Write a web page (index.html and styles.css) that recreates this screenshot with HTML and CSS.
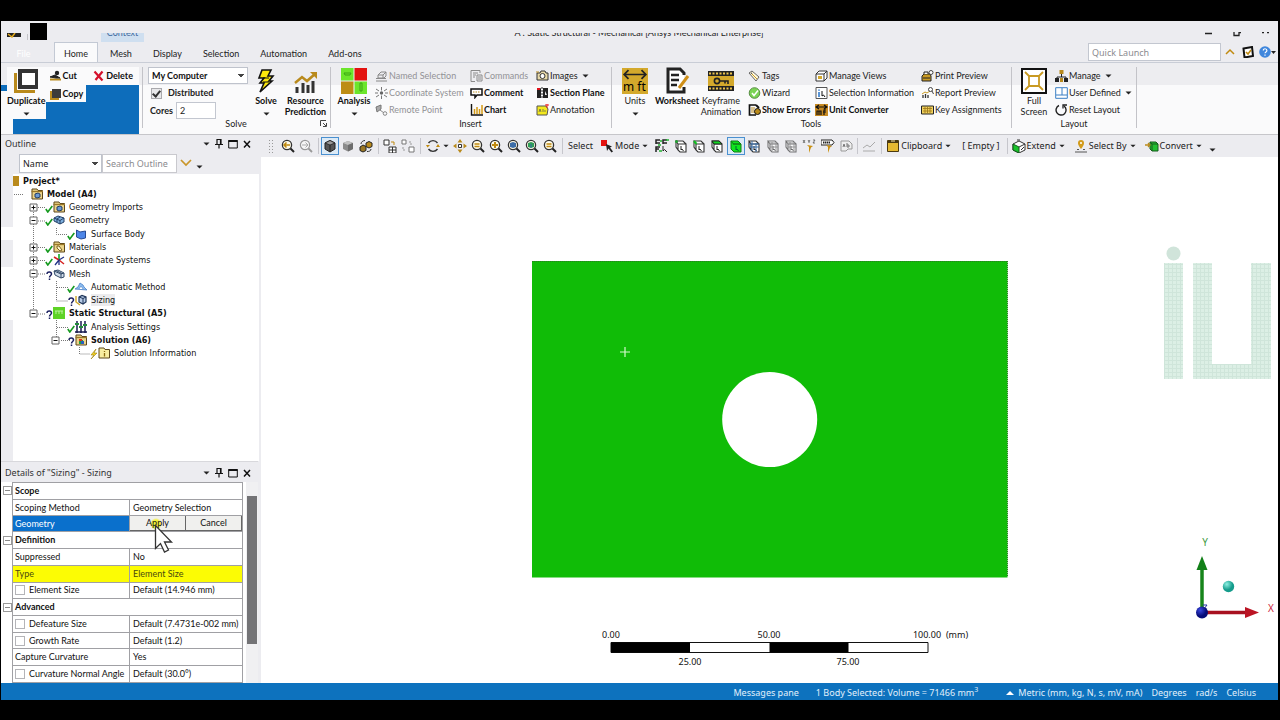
FILE: index.html
```html
<!DOCTYPE html>
<html lang="en">
<head>
<meta charset="utf-8">
<title>A : Static Structural - Mechanical [Ansys Mechanical Enterprise]</title>
<link rel="stylesheet" href="styles.css">
</head>
<body>
<svg class="defs" aria-hidden="true">
  <symbol id="caret" viewBox="0 0 7 4"><path d="M.5.5h6L3.500 3.500z" fill="#222"/></symbol>
  <symbol id="pin" viewBox="0 0 10 10"><path d="M3 .5h4v5H3zM1 5.500h8M5 5.500v4M6.500.5v5" fill="none" stroke="#111" stroke-width="1.200"/></symbol>
  <symbol id="max" viewBox="0 0 10 10"><path d="M.7 1.500h8.600v7.500H.7z" fill="none" stroke="#111"/><path d="M.5 1h9v2h-9z" fill="#111"/></symbol>
  <symbol id="close" viewBox="0 0 10 10"><path d="M2 2l6 6.500M8 2L2 8.500" stroke="#111" stroke-width="1.500"/></symbol>

  <symbol id="duplicate" viewBox="0 0 26 26"><path d="M1 5v20h21v-3H4V5z" fill="#b98a1c"/><path d="M5 1h20v20H5z" fill="#333"/><path d="M9 5h13v12H9z" fill="#fff"/></symbol>
  <symbol id="cut" viewBox="0 0 13 12"><path d="M1 9.500h11" stroke="#b98a1c" stroke-width="2"/><circle cx="8" cy="3" r="2.200" fill="#222"/><path d="M1 7l5-2 5 3-4 0z" fill="#222" stroke="#222"/></symbol>
  <symbol id="copy" viewBox="0 0 13 12"><path d="M1 3h2v7h7v2H1z" fill="#b98a1c"/><path d="M3 1h9v9H3z" fill="#3b3b3b"/></symbol>
  <symbol id="delete" viewBox="0 0 12 12"><path d="M2 1.500l8 9M10 1.500L3 10" stroke="#d5122c" stroke-width="2.200"/></symbol>
  <symbol id="bolt" viewBox="0 0 20 26"><path d="M6 2h9l-3 6h5l-4 5h3L4 24l4-9H4l4-5H3z" fill="#fbe80b" stroke="#111" stroke-width="1.600"/><path d="M7 10h6M7 14h6" stroke="#111"/></symbol>
  <symbol id="resource" viewBox="0 0 26 26"><path d="M4 25v-6M10 25v-10M15 25v-8M20 25V13" stroke="#333" stroke-width="3"/><path d="M2 15l7-6 5 4 8-7" fill="none" stroke="#b98a1c" stroke-width="2.500"/><path d="M17 4h7v7z" fill="#b98a1c"/></symbol>
  <symbol id="analysis" viewBox="0 0 26 26"><path d="M0 0h12.500v12.500H0zM13.500 13.500H26V26H13.500z" fill="#6ce52b"/><path d="M13.500 0H26v12.500H13.500z" fill="#e3120f"/><path d="M0 13.500h12.500V26H0z" fill="#bd8d13"/><path d="M3 5h7l-1 2H4zM19 15v8h2v-8z" fill="none" stroke="#3ba513"/></symbol>
  <symbol id="named" viewBox="0 0 13 12"><path d="M1 11h11M1 8.500h10M3 5l3-3h5v4l-2 2H3zM3 5h5v3M8 5l3-3" fill="none" stroke="#888"/></symbol>
  <symbol id="coord" viewBox="0 0 13 12"><path d="M6.500 0v3.500M6.500 8.500V12M1 2l3 2M12 2L9 4M1 10l3-2M12 10L9 8M0 6h3M10 6h3" stroke="#777"/><circle cx="6.500" cy="6" r="1.700" fill="#666"/></symbol>
  <symbol id="remote" viewBox="0 0 13 12"><path d="M1 3l5-2v4L2 8z" fill="#aaa" stroke="#777"/><path d="M5 6l4 3" stroke="#888"/><circle cx="10" cy="9.500" r="1.800" fill="none" stroke="#888"/></symbol>
  <symbol id="commands" viewBox="0 0 13 12"><path d="M10 3V.5H1v11h4M3 3h5M3 5h3M3 7h2M7 5h5v6H7zM8 7h3M8 9h3" fill="none" stroke="#8a8a8a"/></symbol>
  <symbol id="comment" viewBox="0 0 13 12"><path d="M1 2h11v6H7l-2 2.500V8H1z" fill="#fff" stroke="#111" stroke-width="1.500"/><path d="M3 5h7" stroke="#b98a1c" stroke-dasharray="1.500 1"/></symbol>
  <symbol id="chart" viewBox="0 0 13 12"><path d="M1.500 0v11H13" fill="none" stroke="#111" stroke-width="1.400"/><path d="M4.500 10V5M7 10V3M9.500 10V5M12 10V1" stroke="#d39a16" stroke-width="1.500"/></symbol>
  <symbol id="camera" viewBox="0 0 13 12"><path d="M1 3h3l1-2h4l1 2h2v7H1z" fill="#e8d9a8" stroke="#333"/><circle cx="6.500" cy="6" r="2.500" fill="#fff" stroke="#333"/><path d="M0 2h3" stroke="#b98a1c"/></symbol>
  <symbol id="section" viewBox="0 0 13 12"><path d="M1 3l4-2v10H1zM7 1h5v10H7z" fill="#222"/><path d="M6 0v12" stroke="#222" stroke-dasharray="2 1"/><path d="M1 1h3v2H1z" fill="#e0101b"/><path d="M9 4l2 4H9z" fill="#eee"/></symbol>
  <symbol id="annot" viewBox="0 0 13 12"><path d="M1 2h9l2 3-1 6H1z" fill="#f3e81d" stroke="#555"/><path d="M3 8l1-3 1 3M7 5v3M9 6v2" stroke="#555" fill="none" stroke-width=".7"/><path d="M9 1h4M11 0v4" stroke="#e22"/></symbol>
  <symbol id="units" viewBox="0 0 24 24"><path d="M0 0h24v24H0z" fill="#d4a92c"/><path d="M2 6h20M6 2L2 6l4 4M18 2l4 4-4 4" fill="none" stroke="#222" stroke-width="1.600"/></symbol>
  <symbol id="worksheet" viewBox="0 0 26 28"><path d="M20 8V6l-4-4H4v23h16v-5" fill="#fff" stroke="#222" stroke-width="3"/><path d="M7 8h8M7 13h8M7 18h6" stroke="#222" stroke-width="2.500"/><path d="M15 21l9-12" stroke="#cf8f17" stroke-width="3"/></symbol>
  <symbol id="keyframe" viewBox="0 0 26 20"><path d="M0 0h26v20H0z" fill="#222"/><path d="M0 5h26v10H0z" fill="#d4a92c"/><path d="M1 2.500h24M1 17.500h24" stroke="#eac24c" stroke-width="2" stroke-dasharray="2 1.500"/><circle cx="9" cy="10" r="2.600" fill="none" stroke="#222" stroke-width="1.600"/><path d="M12 10h8v3M17 10v2.500" fill="none" stroke="#222" stroke-width="1.600"/></symbol>
  <symbol id="tags" viewBox="0 0 13 12"><path d="M1 3l3-2 7 6-3 4z" fill="#fff8dc" stroke="#666"/><path d="M3 3l6 6" stroke="#c99a22"/><circle cx="3.500" cy="3.200" r=".8" fill="#555"/></symbol>
  <symbol id="wizard" viewBox="0 0 13 12"><circle cx="6.500" cy="6" r="5.300" fill="#7bd455" stroke="#5a8f45"/><path d="M4 6l2 2.500 4-5" fill="none" stroke="#fff" stroke-width="1.500"/></symbol>
  <symbol id="errors" viewBox="0 0 13 12"><path d="M8 1H1.500v10H8" fill="none" stroke="#111" stroke-width="1.700"/><path d="M3 4h4M3 6h3M3 8h4" stroke="#b98a1c"/><circle cx="9.500" cy="7.500" r="3" fill="#b98a1c" stroke="#111"/><path d="M8 1l3 3" stroke="#111" stroke-width="2"/></symbol>
  <symbol id="views" viewBox="0 0 13 12"><path d="M1 4l3-3h8v7l-3 3H1zM1 4h8v7M9 4l3-3" fill="#fff" stroke="#333"/><path d="M3 6h4v3H3z" fill="#d4a92c"/></symbol>
  <symbol id="selinfo" viewBox="0 0 13 12"><path d="M1 .5h11v11H1z" fill="#fff" stroke="#555"/><path d="M4 5v5M4 2.500v1.200" stroke="#2372c8" stroke-width="1.500"/><path d="M7 4v5l1.500-1L10 10" fill="none" stroke="#111"/></symbol>
  <symbol id="unitconv" viewBox="0 0 13 12"><path d="M0 0h13v12H0z" fill="#c78a22"/><path d="M1 3h11M4 1L1 3l3 2M9 1l3 2-3 2M2 11V7h2v4M4 7h2v4M9 11V6h2M8 8h3" fill="none" stroke="#111" stroke-width="1.200"/></symbol>
  <symbol id="print" viewBox="0 0 13 12"><path d="M1 6l2-2h6l1 2v5H1z" fill="#c99a22" stroke="#222"/><path d="M3 4V2h4v2M2 8h7" stroke="#222" fill="#fff"/><circle cx="10" cy="2.500" r="2" fill="#fff" stroke="#444"/></symbol>
  <symbol id="report" viewBox="0 0 13 12"><path d="M2 11V8M4.500 11V7M7 11V8" stroke="#333" stroke-width="1.300"/><path d="M1 7l3-2 2 1 3-2" fill="none" stroke="#c99a22"/><circle cx="9.500" cy="2.500" r="2" fill="#fff" stroke="#444"/><path d="M11 4l1.500 3" stroke="#444"/></symbol>
  <symbol id="keys" viewBox="0 0 13 12"><path d="M.5 2h12v8H.5z" fill="#f2d25e" stroke="#222"/><path d="M2 4.500h9M2 7h9M4 3v6M6.500 3v6M9 3v6" stroke="#9a7415" stroke-width=".8"/></symbol>
  <symbol id="full" viewBox="0 0 26 26"><path d="M1 1h24v24H1z" fill="#fff" stroke="#111" stroke-width="2"/><path d="M8 8h10v10H8zM8 8L4 4M18 8l4-4M8 18l-4 4M18 18l4 4" fill="none" stroke="#c99a22" stroke-width="1.800"/></symbol>
  <symbol id="manage" viewBox="0 0 13 12"><path d="M6.500 4v3M2 10V7h9v3" fill="none" stroke="#222"/><path d="M4.500 0h4v4h-4z" fill="#b98a1c"/><path d="M0 8h4v4H0zM9 8h4v4H9z" fill="#222"/><path d="M5 8h3v4H5z" fill="#b98a1c"/></symbol>
  <symbol id="userdef" viewBox="0 0 13 12"><path d="M.7.700h11.600v10.600H.7zM7 8V1M1 8h11" fill="#fff" stroke="#3a7fc4"/></symbol>
  <symbol id="reset" viewBox="0 0 13 12"><path d="M4 1.500a5 5 0 1 0 5 .5" fill="none" stroke="#222" stroke-width="1.400"/><path d="M8 4.500V1h4" fill="none" stroke="#222" stroke-width="1.300"/></symbol>

  <symbol id="zoomg" viewBox="0 0 14 14"><circle cx="6" cy="6" r="4.600" fill="#fffbe8" stroke="#333" stroke-width="1.300"/><path d="M9.500 9.500L13 13" stroke="#222" stroke-width="2"/></symbol>
  <symbol id="zprev" viewBox="0 0 14 14"><use href="#zoomg"/><path d="M3 6h6M5.500 3.500L3 6l2.500 2.500" fill="none" stroke="#c08a10" stroke-width="1.500"/></symbol>
  <symbol id="znext" viewBox="0 0 14 14"><circle cx="6" cy="6" r="4.600" fill="#f6f6f6" stroke="#999" stroke-width="1.200"/><path d="M9.500 9.500L13 13" stroke="#999" stroke-width="1.800"/><path d="M3 6h6M6.500 3.500L9 6 6.500 8.500" fill="none" stroke="#aaa"/></symbol>
  <symbol id="zbox" viewBox="0 0 14 14"><use href="#zoomg"/><path d="M3.500 5h5M3.500 7.500h5" stroke="#c08a10" stroke-width="1.400"/></symbol>
  <symbol id="zplus" viewBox="0 0 14 14"><use href="#zoomg"/><path d="M3 6h6M6 3v6" stroke="#c08a10" stroke-width="2"/></symbol>
  <symbol id="zblue" viewBox="0 0 14 14"><use href="#zoomg"/><path d="M3 4l3-1 3 1v4L6 9 3 8z" fill="#3c6da8"/></symbol>
  <symbol id="zgreen" viewBox="0 0 14 14"><use href="#zoomg"/><path d="M3 4l3-1 3 1v4L6 9 3 8z" fill="#2f9d58"/><path d="M6 5v4" stroke="#3c6da8"/></symbol>
  <symbol id="cubedark" viewBox="0 0 14 14"><path d="M2 4l5-2.500L12 4v6l-5 3-5-3z" fill="#555" stroke="#222"/><path d="M2 4l5 2 5-2-5-2.500z" fill="#999" stroke="#222" stroke-width=".8"/><path d="M7 6v7" stroke="#222"/></symbol>
  <symbol id="cubegray" viewBox="0 0 14 14"><path d="M2 4l5-2 5 2v6l-5 2.500L2 10z" fill="#8b8b8b"/><path d="M2 4l5 2 5-2-5-2z" fill="#c2c2c2"/><path d="M7 6l5-2v6l-5 2.500z" fill="#6d6d6d"/></symbol>
  <symbol id="cubes" viewBox="0 0 14 14"><path d="M1 8l3-2 3 1.500v4L4 13l-3-1.500z" fill="#9a7725" stroke="#222"/><path d="M7 4l3-1.500L13 4v3.500L10 9 7 7.500z" fill="#b98a1c" stroke="#222"/><path d="M2 5c0-2 2-3.500 4-3.500M8 12.500c2 0 4-.5 4-2.500" fill="none" stroke="#333"/></symbol>
  <symbol id="expandg" viewBox="0 0 14 14"><path d="M1 1h5v5H1zM6 8h7v6H6zM6 11h7M9.500 8v6" fill="#fff" stroke="#333"/><path d="M8 3h3v3" fill="none" stroke="#c08a10"/></symbol>
  <symbol id="collapseg" viewBox="0 0 14 14"><path d="M1 1h4v4H1zM8 8h5v5H8z" fill="#fff" stroke="#777"/><path d="M2 8v3h3M8 3h2v3" fill="none" stroke="#999" stroke-dasharray="2 1"/></symbol>
  <symbol id="rotate" viewBox="0 0 14 14"><path d="M2.500 4a5.500 5.500 0 0 1 9 0M11.500 10a5.500 5.500 0 0 1-9 0" fill="none" stroke="#333" stroke-width="1.400"/><path d="M0 6h4L1.500 8.500zM10 8h4l-2-3z" fill="#c08a10"/></symbol>
  <symbol id="pan" viewBox="0 0 14 14"><path d="M7 0l2.500 3.500h-5zM7 14l2.500-3.500h-5zM0 7l3.500-2.500v5zM14 7l-3.500-2.500v5z" fill="#b98a1c"/><path d="M5.500 5.500h3v3h-3z" fill="#fff" stroke="#333"/></symbol>
  <symbol id="mode" viewBox="0 0 14 14"><path d="M1 1h6v6H1z" fill="#e3120f"/><path d="M6 5l6 2.500-2 1 3 4-1.500 1-3-4L7 12z" fill="#222"/></symbol>
  <symbol id="selall" viewBox="0 0 14 14"><path d="M1 5V1h4M8 5V1h4M1 13V8h4M1 4h4M8 4h4M1 10h3" fill="none" stroke="#222" stroke-width="1.500"/><path d="M3 6h3M5 2h2M11 1h3M4 12h3" stroke="#20b430" stroke-width="1.500"/><path d="M8 7v5l1.500-1.500L12 13" fill="none" stroke="#222"/></symbol>
  <symbol id="cube" viewBox="0 0 14 14"><path d="M4 5h8v8H6L4 11zM4 5L2 2h7l3 3M2 2v6l2 3" fill="#fff" stroke="#333" stroke-width="1.100"/><path d="M7 7v4l1-1 1.500 2" fill="none" stroke="#222"/></symbol>
  <symbol id="cubev" viewBox="0 0 14 14"><use href="#cube"/><circle cx="2.500" cy="2.500" r="1.500" fill="#20a030"/></symbol>
  <symbol id="cubee" viewBox="0 0 14 14"><use href="#cube"/><path d="M2 2l2.500 3" stroke="#10c020" stroke-width="2"/></symbol>
  <symbol id="cubef" viewBox="0 0 14 14"><use href="#cube"/><path d="M2 2h7l3 3H4z" fill="#12d822" stroke="#222"/></symbol>
  <symbol id="cubeb" viewBox="0 0 14 14"><path d="M4 5h8v8H5l-3-3V2h7l3 3z" fill="#10e520" stroke="#127a16"/><path d="M2 2l2.500 3" stroke="#127a16"/><path d="M7 7v4l1-1 1.500 2" fill="none" stroke="#063"/></symbol>
  <symbol id="cubem" viewBox="0 0 14 14"><use href="#cube"/><path d="M2 5h10M2 8h10M5 2v10M9 4v9" stroke="#3a6ea8"/></symbol>
  <symbol id="cuben" viewBox="0 0 14 14"><g opacity=".65"><use href="#cube"/><path d="M3 4h8M4 8h8M6 3v9M10 4v9" stroke="#666"/></g></symbol>
  <symbol id="xyz" viewBox="0 0 14 14"><path d="M1 1l2 3M3 1L1 4M6 1l1 1.500L8 1M7 2v2M11 1h2l-2 3h2" fill="none" stroke="#555" stroke-width=".8"/><path d="M5 6l6 1-2 1.500L7 14V8z" fill="#c99010"/></symbol>
  <symbol id="probe" viewBox="0 0 14 14"><path d="M0 1h11l2 2.500L11 6H0z" fill="#fff" stroke="#222"/><path d="M2 3.500h7" stroke="#222" stroke-width="2" stroke-dasharray="1.500 .5"/><path d="M5 6l6 1-2 1.500L7 14V8z" fill="#c99010"/></symbol>
  <symbol id="abc" viewBox="0 0 14 14"><path d="M2 2h8l3 3v5H9l-2 2H2z" fill="#eee" stroke="#999"/><path d="M4 8l1-3 1 3M8 4v4h2V6H8" fill="none" stroke="#777"/></symbol>
  <symbol id="graph" viewBox="0 0 14 14"><path d="M1 12h12M1 9l4-3 3 2 5-5" fill="none" stroke="#aaa"/></symbol>
  <symbol id="clip" viewBox="0 0 14 14"><path d="M1.500 1.500h11v11h-11z" fill="#e6ba32" stroke="#4b3a12"/><path d="M2 1h10v3H2z" fill="#4b3a12"/><path d="M5 2h4" stroke="#f4e4ae"/></symbol>
  <symbol id="extend" viewBox="0 0 14 14"><path d="M1 5l6-3 6 3v6l-6 3-6-3z" fill="#fff" stroke="#333"/><path d="M1 5l6 3v6l-6-3z" fill="#18c42a" stroke="#165a1c"/><path d="M7 8l6-3M5 1h3M9 11l3-3" stroke="#333"/></symbol>
  <symbol id="selby" viewBox="0 0 14 14"><path d="M7 10C4 6 4 5 4 4a3 3 0 0 1 6 0c0 1 0 2-3 6z" fill="#d29b1b"/><circle cx="7" cy="4" r="1" fill="#fff"/><path d="M1 13h12M3 10.500h2M9 10.500h2" stroke="#555"/></symbol>
  <symbol id="convert" viewBox="0 0 14 14"><path d="M5 3h6l2 2v7H7l-2-2zM5 3l2 2v7M7 5h6" fill="#20c030" stroke="#165a1c"/><path d="M0 6h5M3 4l2 2-2 2" stroke="#b98a1c" stroke-width="1.300" fill="none"/></symbol>

  <symbol id="ok" viewBox="0 0 8 10"><path d="M.8 6l2 3L7.300 3" fill="none" stroke="#159a1e" stroke-width="1.600"/></symbol>
  <symbol id="ask" viewBox="0 0 8 10"><path d="M2 4c0-3 4.500-2.500 4.500 0C6.500 5.500 4.500 5.500 4.500 7.500M4.500 8.500V10" fill="none" stroke="#1b2060" stroke-width="1.500"/></symbol>
  <symbol id="zap" viewBox="0 0 8 10"><path d="M6 0L1 6h3L1 10l6-6H4z" fill="#f5d320" stroke="#9a7d10" stroke-width=".6"/></symbol>
  <symbol id="plus" viewBox="0 0 9 9"><path d="M1 1h7v7H1z" fill="#fff" stroke="#666"/><path d="M2.500 4.500h4M4.500 2.500v4" stroke="#111"/></symbol>
  <symbol id="minus" viewBox="0 0 9 9"><path d="M1 1h7v7H1z" fill="#fff" stroke="#666"/><path d="M2.500 4.500h4" stroke="#111"/></symbol>
  <symbol id="folder" viewBox="0 0 12 12"><path d="M1 3V1h5l1 1.500h4.500V11H1z" fill="#ecd489" stroke="#5c471a"/><path d="M.5 3.500H12" stroke="#9a7728" stroke-width="1.300"/></symbol>
  <symbol id="fmodel" viewBox="0 0 12 12"><use href="#folder"/><path d="M4 6l3-1 2 1v3l-3 1-2-1z" fill="#6c9ad2" stroke="#223d66"/></symbol>
  <symbol id="fmat" viewBox="0 0 12 12"><use href="#folder"/><path d="M4 5l2 0 3 4-2 1-3-3z" fill="#fff6cf" stroke="#7a6020"/></symbol>
  <symbol id="fsol" viewBox="0 0 12 12"><use href="#folder"/><path d="M4 6h4v4H4z" fill="#20a040"/><path d="M6 7h3v3H6z" fill="#2860c0"/><path d="M4 5h3v2H4z" fill="#e03020"/></symbol>
  <symbol id="finfo" viewBox="0 0 12 12"><path d="M1 3V1h5l1 1.500h4.500V11H1z" fill="#f8eda0" stroke="#5c471a"/><path d="M6.500 6v3.500M6.500 4v1" stroke="#8b6c10" stroke-width="1.300"/></symbol>
  <symbol id="geo" viewBox="0 0 12 12"><path d="M1 4l4-2 6 2v4L7 10 1 7z" fill="#7eb0de" stroke="#233f66"/><path d="M1 4l6 2.500L11 4M7 6.500V10M4 5l3-2M4 5v3" fill="none" stroke="#233f66"/></symbol>
  <symbol id="surf" viewBox="0 0 12 12"><path d="M1.500 2L5 4l5.500-1v7L6 11 1.500 9z" fill="#4d86e8" stroke="#284b95"/></symbol>
  <symbol id="axes" viewBox="0 0 12 12"><path d="M6 6V0" stroke="#22b030" stroke-width="1.700"/><path d="M6 6l5 4M6 6L1 3" stroke="#d52222" stroke-width="1.500"/><path d="M6 6l-4 5M6 6l5-3M6 6v5" stroke="#238" stroke-width="1.300"/></symbol>
  <symbol id="meshi" viewBox="0 0 12 12"><path d="M1 3l4-1 6 3v4L8 10 2 7z" fill="#cfdbe9" stroke="#334a68"/><path d="M1 3l7 3v4M8 6l3-1M3 2.500l6 3" fill="none" stroke="#334a68"/></symbol>
  <symbol id="auto" viewBox="0 0 12 12"><path d="M0 8l3-2 2-4 3 2 1 2 3 3z" fill="#8dbcf0" stroke="#4a82c8" stroke-width=".8"/><path d="M4 8l2-3 2 3" fill="#fff" stroke="#4a82c8" stroke-width=".6"/></symbol>
  <symbol id="size" viewBox="0 0 12 12"><path d="M4 3l3-1.500L11 3v5l-3 2-4-2z" fill="#b7cce8" stroke="#1f3558" stroke-width="1.200"/><path d="M4 3l4 1.500L11 3M8 4.500V10" fill="none" stroke="#1f3558"/><path d="M1 2v6l4 3" fill="none" stroke="#cda526" stroke-width="1.400"/></symbol>
  <symbol id="static" viewBox="0 0 12 12"><path d="M0 0h12v12H0z" fill="#5ed326"/><path d="M2 4h8M3 4v3M6 4v3M9 4v3" stroke="#c4f5a8" stroke-width=".9"/></symbol>
  <symbol id="settings" viewBox="0 0 12 12"><path d="M2 0v12M6 0v12M10 0v12M0 11h12" stroke="#1a1c50" stroke-width="1.500"/><path d="M0 3h4M4 6h4M8 4h4" stroke="#238b3a" stroke-width="2"/></symbol>
</svg>

<div class="app">
  <header class="titlebar">
    <div class="caption">
      <div class="quick">
        <svg class="qa" viewBox="0 0 14 5"><path d="M0 0h14v4H0z" fill="#222"/><path d="M1 1l4 3 3-4" fill="none" stroke="#e0a81c" stroke-width="1.500"/></svg>
        <i class="qsep"></i>
        <i class="qbox"></i>
      </div>
      <div class="context"><span>Context</span></div>
      <div class="title"><span>A : Static Structural - Mechanical [Ansys Mechanical Enterprise]</span></div>
      <div class="winbtns">
        <svg viewBox="0 0 64 5"><path d="M0 1.500h7M29 0v3.500h5V0M36 .5h-2M57 .5h2M62 .5h2" fill="none" stroke="#222" stroke-width="1.300"/></svg>
      </div>
    </div>
    <nav class="tabs">
      <button class="tab file">File</button>
      <button class="tab on">Home</button>
      <button class="tab">Mesh</button>
      <button class="tab">Display</button>
      <button class="tab">Selection</button>
      <button class="tab">Automation</button>
      <button class="tab">Add-ons</button>
      <input class="launch" type="text" placeholder="Quick Launch" aria-label="Quick Launch">
      <svg class="t12" viewBox="0 0 12 12"><path d="M2 8l4-4 4 4" fill="none" stroke="#c08a10" stroke-width="1.500"/></svg>
      <svg class="t12" viewBox="0 0 12 12"><path d="M1.500 2.500L10 1l1 9-8.500 1.500z" fill="#fff" stroke="#111" stroke-width="2"/><path d="M4 6l2 2 3-4" fill="none" stroke="#c08a10" stroke-width="1.600"/></svg>
      <svg class="help" viewBox="0 0 17 12"><circle cx="6" cy="6" r="5.800" fill="#3f86dc"/><path d="M4.300 4.500c0-2.500 3.600-2.200 3.600 0C7.900 6 6 5.800 6 7.300M6 8.500v1.200" fill="none" stroke="#fff" stroke-width="1.200"/><path d="M12 5h5l-2.500 3z" fill="#222"/></svg>
    </nav>
  </header>

  <section class="ribbon">
    <div class="clipboard">
      <button class="big bold dup"><svg><use href="#duplicate"/></svg><span>Duplicate</span><svg class="caret"><use href="#caret"/></svg></button>
      <div class="clipcol">
        <button class="cmd bold"><svg><use href="#cut"/></svg>Cut</button>
        <button class="cmd bold copy"><svg><use href="#copy"/></svg>Copy</button>
      </div>
      <button class="cmd bold del"><svg><use href="#delete"/></svg>Delete</button>
    </div>
    <div class="group solve">
      <div class="body">
        <div class="form">
          <select aria-label="Solve target"><option>My Computer</option></select>
          <label class="check"><input type="checkbox" checked>Distributed</label>
          <label class="cores">Cores <input type="text" value="2"></label>
        </div>
        <button class="big bold"><svg><use href="#bolt"/></svg><span>Solve</span><svg class="caret"><use href="#caret"/></svg></button>
        <button class="big bold"><svg><use href="#resource"/></svg><span>Resource<br>Prediction</span></button>
      </div>
      <div class="name">Solve</div>
      <svg class="launcher" viewBox="0 0 7 7"><path d="M.5 6V.5H6M3 3l3 3M6.500 3v3.500H3" fill="none" stroke="#444"/></svg>
    </div>
    <div class="group insert">
      <div class="body">
        <button class="big bold"><svg><use href="#analysis"/></svg><span>Analysis</span><svg class="caret"><use href="#caret"/></svg></button>
        <div class="col">
          <button class="cmd" disabled><svg><use href="#named"/></svg>Named Selection</button>
          <button class="cmd" disabled><svg><use href="#coord"/></svg>Coordinate System</button>
          <button class="cmd" disabled><svg><use href="#remote"/></svg>Remote Point</button>
        </div>
        <div class="col">
          <button class="cmd" disabled><svg><use href="#commands"/></svg>Commands</button>
          <button class="cmd bold"><svg><use href="#comment"/></svg>Comment</button>
          <button class="cmd bold"><svg><use href="#chart"/></svg>Chart</button>
        </div>
        <div class="col">
          <button class="cmd"><svg><use href="#camera"/></svg>Images<svg class="caret"><use href="#caret"/></svg></button>
          <button class="cmd bold"><svg><use href="#section"/></svg>Section Plane</button>
          <button class="cmd"><svg><use href="#annot"/></svg>Annotation</button>
        </div>
      </div>
      <div class="name">Insert</div>
    </div>
    <div class="group tools">
      <div class="body">
        <button class="big units"><svg viewBox="0 0 24 24"><use href="#units"/><text x="1" y="21" class="mft">m ft</text></svg><span>Units</span><svg class="caret"><use href="#caret"/></svg></button>
        <button class="big bold"><svg><use href="#worksheet"/></svg><span>Worksheet</span></button>
        <button class="big"><svg><use href="#keyframe"/></svg><span>Keyframe<br>Animation</span></button>
        <div class="col">
          <button class="cmd"><svg><use href="#tags"/></svg>Tags</button>
          <button class="cmd"><svg><use href="#wizard"/></svg>Wizard</button>
          <button class="cmd bold"><svg><use href="#errors"/></svg>Show Errors</button>
        </div>
        <div class="col">
          <button class="cmd"><svg><use href="#views"/></svg>Manage Views</button>
          <button class="cmd"><svg><use href="#selinfo"/></svg>Selection Information</button>
          <button class="cmd bold"><svg><use href="#unitconv"/></svg>Unit Converter</button>
        </div>
        <div class="col">
          <button class="cmd"><svg><use href="#print"/></svg>Print Preview</button>
          <button class="cmd"><svg><use href="#report"/></svg>Report Preview</button>
          <button class="cmd"><svg><use href="#keys"/></svg>Key Assignments</button>
        </div>
      </div>
      <div class="name">Tools</div>
    </div>
    <div class="group layout">
      <div class="body">
        <button class="big"><svg><use href="#full"/></svg><span>Full<br>Screen</span></button>
        <div class="col">
          <button class="cmd"><svg><use href="#manage"/></svg>Manage<svg class="caret"><use href="#caret"/></svg></button>
          <button class="cmd"><svg><use href="#userdef"/></svg>User Defined<svg class="caret"><use href="#caret"/></svg></button>
          <button class="cmd"><svg><use href="#reset"/></svg>Reset Layout</button>
        </div>
      </div>
      <div class="name">Layout</div>
    </div>
  </section>

  <main class="work">
    <aside class="side">
      <section class="pane outline">
        <div class="panehead"><h2>Outline</h2><svg class="caret"><use href="#caret"/></svg><svg><use href="#pin"/></svg><svg><use href="#max"/></svg><svg><use href="#close"/></svg></div>
        <div class="search">
          <select aria-label="Filter by"><option>Name</option></select>
          <input type="text" placeholder="Search Outline" aria-label="Search Outline">
          <svg class="chev" viewBox="0 0 12 8"><path d="M1 1l5 5 5-5" fill="none" stroke="#c9962a" stroke-width="1.700"/></svg>
          <svg class="caret low"><use href="#caret"/></svg>
        </div>
        <div class="treebox">
          <svg class="wires" viewBox="0 0 257 287"><path d="M13 20.500h10M32.500 34v107M37 33.500h8M37 47h8M37 73.500h8M37 86.500h8M37 100h8M37 140h8M55.500 54v6.500H67M55.500 107v20H67M56 113.500h11M55.500 146v20M56 153.500h11M60 166.500h9M78.500 173v7H89" fill="none" stroke="#777" stroke-dasharray="1 1"/></svg>
          <ul class="tree">
            <li class="l0"><svg viewBox="0 0 6 12"><path d="M0 1h6v10H0z" fill="#b98a1c"/></svg><b>Project*</b></li>
            <li class="l1"><svg><use href="#fmodel"/></svg><b>Model (A4)</b></li>
            <li class="l2"><svg class="exp"><use href="#plus"/></svg><svg class="st"><use href="#ok"/></svg><svg><use href="#fmodel"/></svg>Geometry Imports</li>
            <li class="l2"><svg class="exp"><use href="#minus"/></svg><svg class="st"><use href="#ok"/></svg><svg><use href="#geo"/></svg>Geometry</li>
            <li class="l3"><svg class="st"><use href="#ok"/></svg><svg><use href="#surf"/></svg>Surface Body</li>
            <li class="l2"><svg class="exp"><use href="#plus"/></svg><svg class="st"><use href="#ok"/></svg><svg><use href="#fmat"/></svg>Materials</li>
            <li class="l2"><svg class="exp"><use href="#plus"/></svg><svg class="st"><use href="#ok"/></svg><svg><use href="#axes"/></svg>Coordinate Systems</li>
            <li class="l2"><svg class="exp"><use href="#minus"/></svg><svg class="st"><use href="#ask"/></svg><svg><use href="#meshi"/></svg>Mesh</li>
            <li class="l3"><svg class="st"><use href="#ok"/></svg><svg><use href="#auto"/></svg>Automatic Method</li>
            <li class="l3"><svg class="st"><use href="#ask"/></svg><svg><use href="#size"/></svg><span class="picked">Sizing</span></li>
            <li class="l2"><svg class="exp"><use href="#minus"/></svg><svg class="st"><use href="#ask"/></svg><svg><use href="#static"/></svg><b>Static Structural (A5)</b></li>
            <li class="l3"><svg class="st"><use href="#ok"/></svg><svg><use href="#settings"/></svg>Analysis Settings</li>
            <li class="l3 open"><svg class="exp"><use href="#minus"/></svg><svg class="st"><use href="#ask"/></svg><svg><use href="#fsol"/></svg><b>Solution (A6)</b></li>
            <li class="l4"><svg class="st"><use href="#zap"/></svg><svg><use href="#finfo"/></svg>Solution Information</li>
          </ul>
        </div>
      </section>
      <section class="pane details">
        <div class="panehead"><h2>Details of "Sizing" - Sizing</h2><svg class="caret"><use href="#caret"/></svg><svg><use href="#pin"/></svg><svg><use href="#max"/></svg><svg><use href="#close"/></svg></div>
        <div class="gridwrap">
          <table class="props">
            <colgroup><col class="c1"><col class="c2"><col></colgroup>
            <tr><td class="tog"><i></i></td><th colspan="2">Scope</th></tr>
            <tr><td></td><td>Scoping Method</td><td>Geometry Selection</td></tr>
            <tr class="sel"><td></td><td>Geometry</td><td class="acts"><div><button>Apply</button><button>Cancel</button></div></td></tr>
            <tr><td class="tog"><i></i></td><th colspan="2">Definition</th></tr>
            <tr><td></td><td>Suppressed</td><td>No</td></tr>
            <tr class="hot"><td></td><td>Type</td><td>Element Size</td></tr>
            <tr><td></td><td><label><input type="checkbox">Element Size</label></td><td>Default (14.946 mm)</td></tr>
            <tr><td class="tog"><i></i></td><th colspan="2">Advanced</th></tr>
            <tr><td></td><td><label><input type="checkbox">Defeature Size</label></td><td>Default (7.4731e-002 mm)</td></tr>
            <tr><td></td><td><label><input type="checkbox">Growth Rate</label></td><td>Default (1.2)</td></tr>
            <tr><td></td><td>Capture Curvature</td><td>Yes</td></tr>
            <tr><td></td><td><label><input type="checkbox">Curvature Normal Angle</label></td><td>Default (30.0°)</td></tr>
          </table>
          <div class="scroll"><i></i></div>
          <svg class="pointer" viewBox="0 0 20 30"><path d="M1.500 1.500v23l5-5 4 8.500 4-2-4-8h7z" fill="#fff" stroke="#333" stroke-width="1.300"/></svg>
        </div>
      </section>
    </aside>

    <section class="stage">
      <div class="toolbar">
        <i class="grip"></i>
        <button><svg><use href="#zprev"/></svg></button><button><svg><use href="#znext"/></svg></button><i class="sep"></i>
        <button class="on"><svg><use href="#cubedark"/></svg></button><button><svg><use href="#cubegray"/></svg></button><button><svg><use href="#cubes"/></svg></button><i class="sep"></i>
        <button><svg><use href="#expandg"/></svg></button><button><svg><use href="#collapseg"/></svg></button><i class="sep"></i>
        <button class="drop"><svg><use href="#rotate"/></svg><svg class="caret"><use href="#caret"/></svg></button>
        <button><svg><use href="#pan"/></svg></button><button><svg><use href="#zbox"/></svg></button><button><svg><use href="#zplus"/></svg></button><button><svg><use href="#zblue"/></svg></button><button><svg><use href="#zgreen"/></svg></button><button><svg><use href="#zbox"/></svg></button><i class="sep wide"></i>
        <span class="lab">Select</span>
        <button class="text mode"><svg><use href="#mode"/></svg>Mode<svg class="caret"><use href="#caret"/></svg></button>
        <div class="filters">
          <button><svg><use href="#selall"/></svg></button><button><svg><use href="#cubev"/></svg></button><button><svg><use href="#cubee"/></svg></button><button><svg><use href="#cubef"/></svg></button><button class="on"><svg><use href="#cubeb"/></svg></button><button><svg><use href="#cubem"/></svg></button><button><svg><use href="#cuben"/></svg></button><button><svg><use href="#cuben"/></svg></button><button><svg><use href="#xyz"/></svg></button><button><svg><use href="#probe"/></svg></button><button><svg><use href="#abc"/></svg></button>
        </div>
        <i class="sep"></i><button><svg><use href="#graph"/></svg></button><i class="sep"></i>
        <button class="text"><svg><use href="#clip"/></svg>Clipboard<svg class="caret"><use href="#caret"/></svg></button>
        <span class="empty">[ Empty ]</span><i class="sep"></i>
        <button class="text"><svg><use href="#extend"/></svg>Extend<svg class="caret"><use href="#caret"/></svg></button>
        <button class="text"><svg><use href="#selby"/></svg>Select By<svg class="caret"><use href="#caret"/></svg></button>
        <button class="text"><svg><use href="#convert"/></svg>Convert<svg class="caret"><use href="#caret"/></svg></button>
        <svg class="caret low"><use href="#caret"/></svg>
      </div>
      <svg class="view" viewBox="261 157 1017 526" role="img" aria-label="Plate with hole">
        <defs>
          <pattern id="weave" width="4" height="4" patternUnits="userSpaceOnUse"><path d="M0 0h4v4H0z" fill="#dcefe5"/><path d="M0 .5h4M.5 0v4" stroke="#cfe5da" stroke-width="1"/></pattern>
          <radialGradient id="teal" cx=".35" cy=".3"><stop offset="0" stop-color="#8ff0e2"/><stop offset="1" stop-color="#159c8c"/></radialGradient>
          <radialGradient id="navy" cx=".35" cy=".3"><stop offset="0" stop-color="#3a48e0"/><stop offset="1" stop-color="#060c78"/></radialGradient>
        </defs>
        <path d="M532 261h475.500v316.500H532z" fill="#10bc07"/>
        <path d="M532 261.500h475.500" stroke="#2a7a22" stroke-dasharray="1 1"/><path d="M1007.500 261v316" stroke="#2a7a22" stroke-dasharray="1 1"/>
        <circle cx="769.700" cy="419.500" r="47.500" fill="#fff"/>
        <path d="M620 352h10M625 347v10" stroke="#d5f8cf" stroke-width="1.200"/>
        <circle cx="1173.500" cy="253.500" r="7" fill="#d0e4da"/>
        <path d="M1164 263h19v116h-19zM1193 263h19v101h39V263h20v116h-78z" fill="url(#weave)"/>
        <path d="M611 642.500h317v10H611z" fill="#fff" stroke="#111"/><path d="M611 642.500h79v10h-79zM769.500 642.500h79v10h-79z" fill="#000"/>
        <g class="scale"><text x="611" y="638">0.00</text><text x="769" y="638">50.00</text><text x="927" y="638">100.00</text><text x="957" y="638">(mm)</text><text x="690" y="665">25.00</text><text x="848" y="665">75.00</text></g>
        <path d="M1202 608v-40" stroke="#17851b" stroke-width="3.500"/><path d="M1202 556l-5.500 14h11z" fill="#128018"/>
        <path d="M1206 612.500h40" stroke="#a81120" stroke-width="3.500"/><path d="M1259 612.500l-14-5.500v11z" fill="#bb1424"/>
        <path d="M1203 605h4l-3 4" fill="none" stroke="#2230a0"/>
        <circle cx="1202" cy="612.500" r="6" fill="url(#navy)"/><circle cx="1228.500" cy="586.500" r="5.700" fill="url(#teal)"/>
        <g class="axis"><text x="1205" y="546" fill="#3f9a3f">Y</text><text x="1271" y="612" fill="#cc2840">X</text></g>
      </svg>
    </section>
  </main>

  <footer class="status">
    <span class="msg">Messages pane</span><span class="bodysel">1 Body Selected: Volume = 71466 mm<sup>3</sup></span>
    <svg viewBox="0 0 8 5"><path d="M0 5l4-4 4 4z" fill="#fff"/></svg>
    <span class="metric">Metric (mm, kg, N, s, mV, mA)</span><span>Degrees</span><span>rad/s</span><span>Celsius</span>
  </footer>
</div>
</body>
</html>
```
FILE: styles.css
```css
* { box-sizing: border-box; }
body { margin: 0; background: #000; color: #222; font: 9px/12px Lato, "Noto Sans", sans-serif; }
button, input, select { font: inherit; color: inherit; margin: 0; }
button { background: none; border: 0; padding: 0; white-space: nowrap; }
svg { flex: none; display: block; }
i { flex: none; }
.defs { position: absolute; width: 0; height: 0; }
.caret { width: 7px; height: 4px; }

.app { min-height: 100vh; border: solid #000; border-width: 21px 2px 21px 1px; display: flex; flex-direction: column; }

/* title bar and tabs */
.titlebar { background: #ececf0; border-bottom: 1px solid #c9cdd6; }
.caption { display: flex; align-items: flex-end; height: 21px; position: relative; }
.quick { display: flex; align-items: flex-end; width: 100px; height: 20px; padding-left: 6px; }
.qa { width: 14px; height: 5px; margin-bottom: 4px; }
.qsep { width: 1px; height: 6px; background: #c4c4c8; margin: 0 2px 2px 6px; }
.qbox { width: 17px; height: 17px; background: #000; margin-bottom: 2px; }
.context { width: 43px; height: 9px; background: #cfdff0; color: #3e689c; text-align: center; overflow: hidden; }
.context span, .title span { display: block; margin-top: -6px; }
.title { flex: 1; height: 9px; overflow: hidden; text-align: center; margin-left: -144px; }
.winbtns { position: absolute; right: 9px; bottom: 5px; }
.winbtns svg { width: 64px; height: 5px; }
.tabs { display: flex; align-items: center; height: 20px; padding-right: 2px; }
.tab { height: 20px; padding: 3px 11px 0 10px; }
.tab.file { width: 53px; color: #fff; padding-right: 18px; }
.tab.on { width: 44px; background: #fafafb; border: 1px solid #c3c9d4; border-bottom: 0; padding: 2px 0 0; margin-right: 2px; }
.launch { width: 133px; height: 18px; margin-left: auto; padding: 0 3px; border: 1px solid #c3c7d0; background: #fff; font-family: "Noto Sans", sans-serif; }
.launch::placeholder, .search input::placeholder { color: #8b8b8f; opacity: 1; }
.t12 { width: 12px; height: 12px; margin-left: 3px; }
.t12 + .t12 { margin-left: 6px; }
.help { width: 17px; height: 12px; margin-left: 5px; }

/* ribbon */
.ribbon { display: flex; height: 72px; background: linear-gradient(#ededf0 22px, #fafafb 22px); border-bottom: 1px solid #c6c6ca; }
.clipboard { display: flex; align-items: flex-start; width: 138px; padding-left: 6px; margin-right: 3px;
  background: linear-gradient(#0d6dbb, #0d6dbb) 12px 22px / 126px 49px no-repeat, linear-gradient(#0d6dbb, #0d6dbb) 0 22px / 6px 6px no-repeat; }
.clipboard button { background: #fafafb; }
.clipcol { display: flex; flex-direction: column; margin-top: 4px; }
.clipcol .cmd { padding: 0 3px; height: 18px; }
.clipcol .copy { height: 17px; }
.clipboard .del { margin-top: 4px; height: 18px; padding: 0 6px; }
.clipboard .dup { width: 43px; height: 52px; margin-top: 4px; padding-top: 1px; }
.group { position: relative; display: flex; flex-direction: column; padding-top: 4px; }
.group::before { content: ""; position: absolute; left: 0; top: 4px; bottom: 6px; width: 1px; background: #c3c3c8; }
.layout::after { content: ""; position: absolute; right: 0; top: 4px; bottom: 6px; width: 1px; background: #c3c3c8; }
.body { display: flex; height: 52px; }
.name { text-align: center; line-height: 10px; }
.big { display: flex; flex-direction: column; align-items: center; line-height: 11px; padding-top: 1px; }
.big svg { width: 26px; height: 26px; }
.big span { margin-top: 1px; }
.big .caret { width: 7px; height: 4px; margin-top: 6px; }
.bold { font-weight: 700; color: #111; }
.cmd { display: flex; align-items: center; height: 17px; }
.cmd svg { width: 13px; height: 12px; margin-right: 1px; }
.cmd .caret { width: 7px; height: 4px; margin-left: 4px; }
.cmd:disabled { color: #929296; }
.solve { width: 188px; }
.solve .body { padding-left: 6px; }
.form { display: flex; flex-direction: column; width: 100px; align-items: flex-start; font-weight: 700; }
select { appearance: none; border: 1px solid #bfc3cc; border-radius: 0; padding: 0 3px; background-color: #fff;
  background-image: linear-gradient(to bottom right, #444 50%, transparent 50%), linear-gradient(to bottom left, #444 50%, transparent 50%);
  background-repeat: no-repeat; background-size: 3px 4px; background-position: right 3px center, right 6px center; }
.form select { width: 100px; height: 17px; color: #111; }
.check { display: flex; align-items: center; gap: 6px; height: 18px; padding-left: 3px; }
.check input { appearance: none; width: 11px; height: 11px; border: 1px solid #a9a9ad; background: #e8e8ea; display: grid; place-items: center; }
.check input::after { content: ""; width: 3px; height: 6px; border: solid #333; border-width: 0 2px 2px 0; transform: rotate(40deg); }
.cores { display: flex; align-items: center; gap: 3px; padding-left: 2px; }
.cores input { width: 40px; height: 17px; border: 1px solid #c3c7d0; background: #fff; padding: 0 3px; font-weight: 400; }
.solve .big:nth-child(2) { width: 36px; }
.solve .big:nth-child(3) { width: 43px; }
.launcher { position: absolute; right: 3px; bottom: 7px; width: 7px; height: 7px; }
.insert { width: 281px; }
.insert .body { padding-left: 6px; }
.insert .big { width: 36px; margin-right: 3px; }
.insert .col:nth-child(2) { width: 95px; }
.insert .col:nth-child(3) { width: 66px; }
.tools { width: 400px; }
.tools .body { padding-left: 3px; }
.tools .big { width: 42px; }
.tools .big:nth-child(2) svg { height: 28px; }
.tools .big:nth-child(2) { padding-top: 0; }
.tools .big:nth-child(2) span { margin-top: 0; }
.tools .big:nth-child(3) { width: 46px; }
.mft { font: 11px "Noto Sans", sans-serif; }
.tools .col:nth-child(4) { width: 67px; margin-left: 4px; }
.tools .col:nth-child(5) { width: 106px; }
.layout { width: 126px; }
.layout .big { width: 30px; margin: 0 6px 0 8px; }

/* side panes */
.work { flex: 1; display: flex; }
.side { width: 260px; flex: none; display: flex; flex-direction: column; background: #ececf0; font-family: "Noto Sans", sans-serif; padding-right: 3px; }
.panehead { display: flex; align-items: center; height: 18px; padding: 0 6px 0 4px; }
.panehead h2 { flex: 1; margin: 0; font-size: 9px; font-weight: 400; color: #333; }
.panehead svg { width: 10px; height: 10px; margin-left: 4px; }
.panehead .caret { width: 7px; height: 4px; }
.outline { flex: 1; display: flex; flex-direction: column; }
.search { display: flex; align-items: center; height: 21px; padding-left: 18px; }
.search select { width: 83px; height: 19px; }
.search input { width: 75px; height: 19px; border: 1px solid #c9c9ce; background: #fff; padding: 0 3px; }
.chev { width: 12px; height: 8px; margin: 0 4px 2px 3px; }
.low { align-self: flex-end; margin-bottom: 5px; }
.treebox { position: relative; flex: 1; margin-right: -1px; padding-left: 12px; background: #fff linear-gradient(#ececf0 53px, #fff 53px 66px, #ececf0 66px 93px, #fff 93px 146px, #ececf0 146px) no-repeat 0 0 / 12px 100%; }
.wires { position: absolute; left: 0; top: 0; width: 257px; height: 287px; }
.tree { position: relative; list-style: none; margin: 0; padding: 0; height: 186px; display: flex; flex-direction: column; font-family: "DejaVu Sans Condensed", "DejaVu Sans", sans-serif; color: #111; }
.tree li { flex: 1; display: flex; align-items: center; white-space: nowrap; }
.tree svg { width: 12px; height: 12px; margin-right: 4px; }
.tree .exp { width: 9px; height: 9px; margin-right: 7px; }
.tree .st { width: 8px; height: 10px; margin: 2px 0 0; }
.tree .l0 svg { width: 6px; }
.l1 { padding-left: 18px; }
.l2 { padding-left: 16px; }
.l3 { padding-left: 54px; }
.l3.open { padding-left: 38px; }
.l4 { padding-left: 77px; }
.picked { background: #ececee; }
.details { border-top: 1px solid #d8d8dc; padding-top: 2px; }
.gridwrap { display: flex; position: relative; background: #fff; }
.props { width: 242px; height: 201px; border-collapse: collapse; table-layout: fixed; font-family: Lato, sans-serif; color: #111; }
.c1 { width: 11px; }
.c2 { width: 117px; }
.props td, .props th { padding: 0 3px 0 2px; border: 1px solid #a0a0a4; text-align: left; white-space: nowrap; line-height: 12px; overflow: hidden; }
.props td:nth-child(3) { padding-left: 3px; }
.props td:first-child { padding: 0; border-color: transparent #a0a0a4 transparent transparent; }
.tog i { display: block; width: 9px; height: 9px; margin-left: 1px; border: 1px solid #999; background: linear-gradient(#888, #888) center / 5px 1px no-repeat; }
.props label { display: flex; align-items: center; gap: 4px; }
.props input { appearance: none; flex: none; width: 10px; height: 10px; border: 1px solid #b4b4b8; background: #fff; }
.sel td:nth-child(2) { background: #0a70cc; color: #fff; }
.hot td:nth-child(n+2) { background: #fcfc04; color: #4a4a10; }
.props td.acts:nth-child(3) { padding: 0; height: 15px; }
.acts div { display: flex; height: 15px; }
.acts button { flex: 1; background: #f0f0ee; border: solid #666; border-width: 0 1px 1px 0; }
.acts button:first-child { background: radial-gradient(circle at 26px 8px, #f6f23a 4px, #f0f0ee 6px); }
.scroll { width: 12px; margin-left: 3px; background: #f0f0f2; padding: 14px 1px 0; }
.scroll i { display: block; height: 148px; background: #737376; }
.pointer { position: absolute; left: 153px; top: 42px; width: 20px; height: 30px; }

/* graphics area */
.stage { flex: 1; min-width: 0; display: flex; flex-direction: column; background: #fff; }
.toolbar { display: flex; align-items: center; height: 22px; background: #ececf0; font-family: "Noto Sans", sans-serif; padding-left: 7px; white-space: nowrap; }
.toolbar button { display: flex; align-items: center; justify-content: center; width: 18px; height: 18px; flex: none; }
.toolbar button svg { width: 14px; height: 14px; }
.toolbar button.on { border: 1px solid #4a90d0; background: #dceaf6; }
.toolbar button.text { width: auto; padding: 0 2px; }
.toolbar button.text svg:first-child { margin-right: 1px; }
.toolbar button .caret { width: 6px; height: 4px; margin-left: 3px; }
.toolbar button.drop { width: 28px; }
.grip { width: 5px; height: 14px; margin-right: 6px; background: radial-gradient(#999 25%, transparent 30%) 0 0 / 3px 3px; }
.sep { width: 1px; height: 16px; background: #c6c6cc; margin: 0 2px 0 3px; }
.sep.wide { margin-right: 5px; }
.lab { margin-right: 5px; }
.filters { display: flex; justify-content: space-between; width: 202px; margin-left: 3px; }
.filters + .sep { margin-left: 2px; }
.empty { margin: 0 4px 0 9px; }
.toolbar .text + .text { margin-left: 5px; }
.toolbar > .caret { margin-left: 5px; margin-bottom: 5px; }
.view { flex: 1; width: 100%; min-height: 0; height: 526px; }
.scale { font: 9px "Noto Sans", sans-serif; text-anchor: middle; fill: #111; }
.axis { font: 10px "Noto Sans", sans-serif; text-anchor: middle; }

/* status bar */
.status { display: flex; align-items: center; justify-content: flex-end; height: 17px; padding: 2px 22px 0 0; background: #0d72be; color: #e2f0fb; font-family: "Noto Sans", sans-serif; }
.status span { margin-left: 9px; }
.status .bodysel { margin-left: 17px; }
.status svg { width: 8px; height: 5px; margin-left: 28px; }
.status .metric { margin-left: 4px; }
.status sup { font-size: 7px; line-height: 0; }
```
